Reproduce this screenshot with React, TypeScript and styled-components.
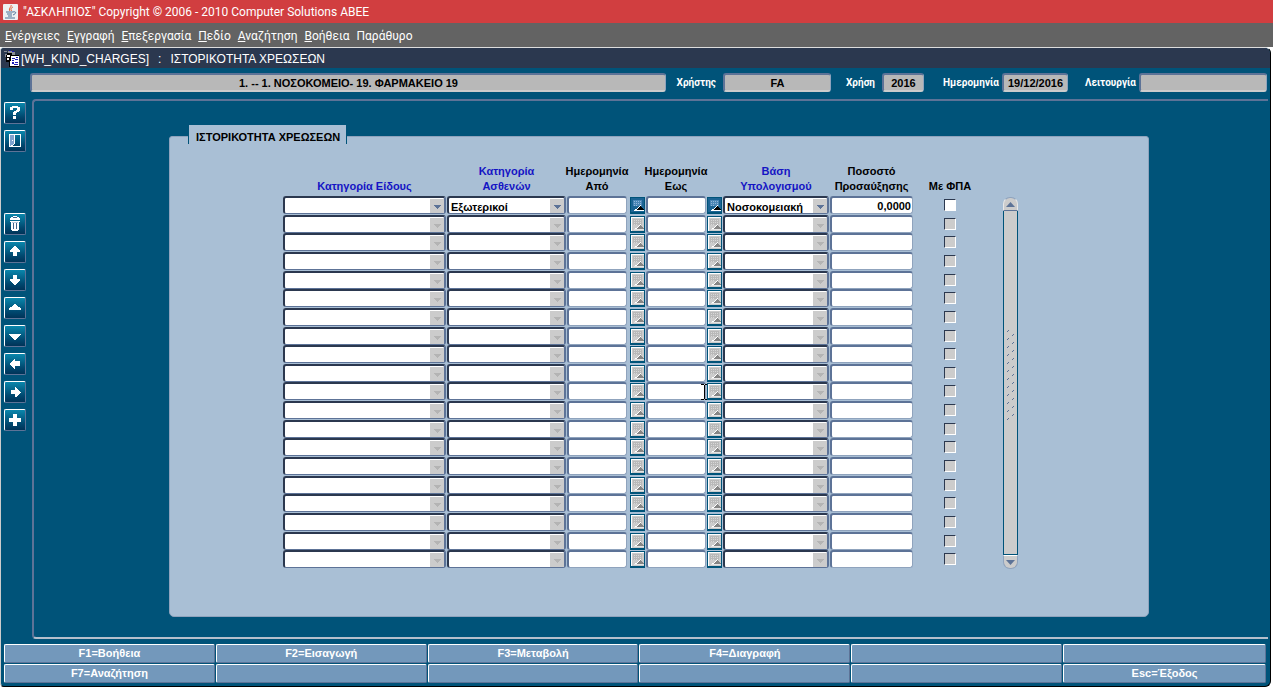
import React, { useState } from 'react';
import styled, { createGlobalStyle, css } from 'styled-components';

const c = {
  teal: '#005379',
  navy: '#2b384f',
  slate: '#5d7397',
  mist: '#a9bfd5',
  haze: '#8fa3bd',
  grey: '#cccccc',
  field: '#b8b8b8',
  blue: '#1414c4',
};

const GlobalStyle = createGlobalStyle`
  *, *::before, *::after { box-sizing: border-box; }
  body { margin: 0; background: #fff; }
  body, button, input, select { font-family: 'Liberation Sans', Arial, sans-serif; font-size: 11px; }
`;

const Page = styled.div`
  min-height: 100vh;
  display: flex;
  flex-direction: column;
`;

const TitleBar = styled.header`
  height: 23px;
  padding-left: 3px;
  display: flex;
  align-items: center;
  gap: 5px;
  background: #d13e40;
  color: #fff;
  font-family: Roboto, sans-serif;
  font-size: 12px;
  white-space: pre;
`;

const MenuBar = styled.nav`
  height: 24px;
  padding: 1px 0 0 5px;
  display: flex;
  align-items: center;
  gap: 7px;
  background: #636363;
`;

const MenuItem = styled.button`
  padding: 0;
  border: 0;
  background: none;
  color: #fff;
  font-family: Roboto, sans-serif;
  font-size: 12px;
  line-height: 16px;
`;

const Window = styled.main`
  flex: 1;
  margin: 0 2px 1px 0;
  display: flex;
  flex-direction: column;
  border: 1px solid #000;
  border-top-color: #ddd;
  border-left-color: #ccc;
  border-radius: 4px 6px 6px 4px;
  background: ${c.teal};
  overflow: hidden;
`;

const Caption = styled.h1`
  margin: 0;
  height: 20px;
  padding: 1px 0 0 3px;
  display: flex;
  align-items: center;
  background: ${c.navy};
  color: #fff;
  font-size: 12px;
  font-weight: 400;
  white-space: pre;
`;

const CaptionPart = styled.span`
  margin-right: 9px;
`;

const InfoBar = styled.div`
  padding: 5px 3px 7px 29px;
  display: grid;
  grid-template-columns: 1fr 57px 108px 51px 42px 78px 66px 71px 128px;
  align-items: center;
`;

const InfoLabel = styled.label<{ $tight?: boolean }>`
  padding-right: ${(p) => (p.$tight ? '3px' : '7px')};
  color: #fff;
  font: 700 10px Roboto, sans-serif;
  text-align: right;
`;

const InfoField = styled.input`
  width: 100%;
  height: 19px;
  padding: 0;
  border: 2px solid ${c.slate};
  border-right: 1px solid ${c.haze};
  border-bottom-color: ${c.grey};
  border-radius: 3px;
  background: ${c.field};
  color: #000;
  font-weight: 700;
  text-align: center;
`;

const Body = styled.div`
  flex: 1;
  display: flex;
`;

const ToolColumn = styled.div`
  width: 31px;
  padding: 3px 0 0 3px;
  display: flex;
  flex-direction: column;
  gap: 6px;
`;

const ToolButton = styled.button<{ $spaced?: boolean }>`
  width: 22px;
  height: 22px;
  padding: 0;
  margin-top: ${(p) => (p.$spaced ? '55px' : '0')};
  display: grid;
  place-items: center;
  border: 1px solid #fff;
  border-right-color: ${c.slate};
  border-bottom-color: ${c.slate};
  border-radius: 2px;
  background: linear-gradient(#0a87ac, #00476e 70%, #003358);
`;

const Frame = styled.section`
  flex: 1;
  margin-right: 2px;
  padding: 35px 119px 20px 135px;
  border: 2px solid ${c.slate};
  border-right: 0;
  border-bottom-color: #b4bfcc;
  border-radius: 4px 0 0 4px;
`;

const Panel = styled.div`
  padding: 0 18px 47px;
  border: 1px solid ${c.haze};
  border-radius: 3px 3px 5px 5px;
  background: ${c.mist};
`;

const PanelTitle = styled.h2`
  width: max-content;
  height: 19px;
  margin: -12px 0 0;
  padding: 4px 6px 0 7px;
  border: solid ${c.teal};
  border-width: 0 1px;
  background: ${c.mist};
  font-size: 11px;
  line-height: 16px;
`;

const Sheet = styled.div`
  margin: 20px 0 0 95px;
  display: flex;
  gap: 17px;
`;

const Grid = styled.table`
  display: block;
`;

const rowColumns = css`
  display: grid;
  grid-template-columns: 163px 119px 60px 17px 60px 15px 106px 83px 72px;
  column-gap: 1px;
`;

const Head = styled.thead`
  display: block;
`;

const HeadRow = styled.tr`
  ${rowColumns}
  height: 32px;
  align-items: end;
`;

const HeadCell = styled.th<{ $key?: boolean }>`
  padding: 0 0 2px;
  display: flex;
  justify-content: center;
  color: ${(p) => (p.$key ? c.blue : '#000')};
  font-size: 11px;
  line-height: 15px;
  white-space: pre;
`;

const Rows = styled.tbody`
  height: 373px;
  display: grid;
  grid-auto-rows: 1fr;
`;

const Row = styled.tr`
  ${rowColumns}
`;

const Cell = styled.td<{ $align?: string }>`
  position: relative;
  padding: 0;
  display: flex;
  justify-content: ${(p) => p.$align ?? 'stretch'};
`;

const Choice = styled.select`
  appearance: none;
  flex: 1;
  height: 18px;
  margin: 0;
  padding: 3px 0 0 2px;
  border: 2px solid ${c.navy};
  border-right-color: ${c.slate};
  border-bottom: 1px solid ${c.slate};
  border-radius: 3px;
  background: #fff;
  color: #000;
  font-weight: 700;
  opacity: 1;
`;

const ChoiceArrow = styled.svg`
  position: absolute;
  top: 3px;
  right: 2px;
  pointer-events: none;
`;

const Entry = styled.input`
  flex: 1;
  min-width: 0;
  height: 18px;
  padding: 0 1px;
  border: 2px solid ${c.slate};
  border-right: 1px solid ${c.haze};
  border-bottom: 1px solid ${c.haze};
  border-radius: 3px;
  background: #fff;
  color: #000;
  font-weight: 700;
  text-align: right;
`;

const DateButton = styled.button`
  flex: none;
  width: 15px;
  height: 17px;
  margin: 1px 0 0;
  padding: 0;
  display: flex;
  border: 1px solid ${c.teal};
  border-bottom-width: 2px;
  background: ${c.grey};
`;

const Tick = styled.input`
  appearance: none;
  width: 12px;
  height: 12px;
  margin: 3px 0 0;
  border: 1px solid ${c.navy};
  border-right-color: #fff;
  border-bottom-color: #fff;
  background: #fff;
  &:disabled { background: ${c.grey}; }
`;

const Caret = styled.svg`
  position: absolute;
  top: 2px;
  right: -2px;
`;

const Scroller = styled.div`
  width: 15px;
  margin-top: 33px;
  display: flex;
  flex-direction: column;
`;

const ScrollButton = styled.button<{ $end?: boolean }>`
  height: 14px;
  padding: 0;
  display: grid;
  place-items: center;
  border: 1px solid ${(p) => (p.$end ? c.haze : '#e8e8e8')};
  border-bottom-color: ${(p) => (p.$end ? c.haze : c.slate)};
  border-top-color: ${(p) => (p.$end ? '#fff' : c.haze)};
  border-radius: ${(p) => (p.$end ? '0 0 7px 7px' : '7px 7px 0 0')};
  background: ${c.grey};
`;

const ScrollTrack = styled.div`
  flex: 1;
  padding-top: 117px;
  display: grid;
  place-items: start center;
  border: 1px solid ${c.teal};
  border-top: 0;
  background: ${c.grey};
`;

const KeyBar = styled.footer`
  padding: 5px 4px 3px 3px;
  display: grid;
  grid-template-columns: repeat(5, 211fr) 203fr;
  grid-auto-rows: 19px;
  gap: 1px;
`;

const KeyButton = styled.button`
  padding: 0 0 2px;
  border: 1px solid #fff;
  border-right-color: ${c.slate};
  border-bottom-color: ${c.slate};
  border-radius: 2px;
  background: #7398bb;
  color: #fff;
  font-weight: 700;
`;

const Icon = ({ children }: { children: React.ReactNode }) => (
  <svg width="20" height="20" viewBox="0 0 20 20" fill="#fff" shapeRendering="crispEdges" aria-hidden>
    {children}
  </svg>
);

const tools = [
  { name: 'Βοήθεια', art: <path d="M5 4h2V3h6v1h2v4h-1v1h-2v1h-1v2H8V9h1V8h2V7h1V5H8v2H5zM8 13h3v3H8z" /> },
  {
    name: 'Έξοδος',
    art: (
      <>
        <path d="M4 3h12v13H4zM5 4v11h10V4z" fillRule="evenodd" />
        <path d="M5 4h4v9l-3 2H5z" fill="#7fa3cf" />
        <path d="M9 4h1v9H9zM8 13h1v1H8zM6 14h2v1H6zM7 9h1v1H7z" />
      </>
    ),
  },
  {
    name: 'Διαγραφή',
    spaced: true,
    art: (
      <>
        <path d="M8 2h4v1h2v1h1v2H5V4h1V3h2z" />
        <path d="M5 7h10v1h-1v8h-1v1H7v-1H6V8H5z" />
        <path d="M8 3h4v1H8zM8 9h1v6H8zM11 9h1v6h-1z" fill="#3f648c" />
        <path d="M7 8h6v1H7z" fill="#b9c8dc" />
      </>
    ),
  },
  { name: 'Προηγούμενη εγγραφή', art: <path d="M9 4h2v1h1v1h1v1h1v1h1v2h-3v4H8v-4H5V8h1V7h1V6h1V5h1z" /> },
  { name: 'Επόμενη εγγραφή', art: <path d="M8 5h4v4h3v2h-1v1h-1v1h-1v1h-1v1H9v-1H8v-1H7v-1H6v-1H5V9h3z" /> },
  { name: 'Προηγούμενη σελίδα', art: <path d="M9 6h2v1h1v1h1v1h2v1h1v2H4v-2h1V9h2V8h1V7h1z" /> },
  { name: 'Επόμενη σελίδα', art: <path d="M4 8h12v1h-1v1h-1v1h-1v1h-1v1h-1v1H9v-1H8v-1H7v-1H6v-1H5V9H4z" /> },
  { name: 'Προηγούμενο πεδίο', art: <path d="M9 5h1v2h5v5h-5v3H9v-1H8v-1H7v-1H6v-1H5V9h1V8h1V7h1V6h1z" /> },
  { name: 'Επόμενο πεδίο', art: <path d="M10 5h1v1h1v1h1v1h1v1h1v1h1v1h-1v1h-1v1h-1v1h-1v1h-2v-3H6V8h4z" /> },
  { name: 'Προσθήκη', art: <path d="M8 4h4v4h4v4h-4v4H8v-4H4V8h4z" /> },
];

const menus: [string, boolean][] = [
  ['Ενέργειες', true],
  ['Εγγραφή', true],
  ['Επεξεργασία', true],
  ['Πεδίο', true],
  ['Αναζήτηση', true],
  ['Βοήθεια', true],
  ['Παράθυρο', false],
];

const keys = ['F1=Βοήθεια', 'F2=Εισαγωγή', 'F3=Μεταβολή', 'F4=Διαγραφή', '', '', 'F7=Αναζήτηση', '', '', '', '', 'Esc=Έξοδος'];

const JavaIcon = () => (
  <svg width="15" height="16" viewBox="0 0 15 16" fill="none" aria-hidden>
    <rect width="15" height="16" rx="1" fill="#eef0f2" />
    <path d="M8 1c1 2-3 3-1 6M10 3c-2 1-3 2-1 4" stroke="#e0572c" />
    <path d="M3 8h7M4 10h5M5 12h4M2 14h10M10 8c4-1 3 2 0 3" stroke="#4b7196" />
  </svg>
);

const FormIcon = () => (
  <svg width="17" height="18" viewBox="0 0 17 18" shapeRendering="crispEdges" aria-hidden>
    <path d="M0 1h3v1H0zM1 4h3v3H1zM4 1h4v2H4zM8 2h3v3H8z" fill="#8b8d96" />
    <path d="M5 0h2v1H5zM8 1h2v1H8z" fill="#1717b8" />
    <path d="M3 3h5v2h7v12H5v-5H2V5h1z" fill="#000" />
    <path d="M3 5h3v2H3zM7 6h8v10H6v-5h1zM3 8h2v2H3z" fill="#fff" />
    <path d="M8 8h3v1H8zM8 10h2v1H8zM12 7h2v1h-2zM11 9h3v1h-3zM8 12h2v2H8zM11 12h3v1h-3zM10 14h4v1h-4z" fill="#1b1bb5" />
  </svg>
);

const Arrow = ({ live }: { live: boolean }) => (
  <ChoiceArrow width="14" height="14" viewBox="0 0 14 14" shapeRendering="crispEdges" aria-hidden>
    <path d="M0 0h14v14H0z" fill={c.grey} />
    <path d="M4 6h7v1h-1v1H9v1H8v1H7V9H6V8H5V7H4z" fill={live ? c.slate : '#b4b4b4'} />
  </ChoiceArrow>
);

const Calendar = ({ live }: { live: boolean }) => (
  <svg width="13" height="14" viewBox="0 0 13 14" shapeRendering="crispEdges" aria-hidden>
    <path d="M0 0h13v14H0z" fill={live ? '#1c6494' : c.grey} />
    {!live && <path d="M0 0h13v1H1v13H0z" fill="#fff" />}
    <path d="M2 2h9v6H2z" fill={live ? '#4a86b6' : '#b9b9b9'} />
    <path d="M3 3h1v1H3zM5 3h1v1H5zM7 3h1v1H7zM9 3h1v1H9zM3 5h1v1H3zM5 5h1v1H5zM7 5h1v1H7zM9 5h1v1H9zM3 7h1v1H3zM5 7h1v1H5z" fill={live ? '#8fb6da' : '#d8d8d8'} />
    <path d="M8 8h1v1H8zM7 9h1v1H7zM6 10h1v1H6zM4 11h2v1H4zM9 7h1v1H9z" fill="#fff" />
    <path d="M9 8h1v1h1v1h1v1h1v1H6v-1h1v-1h1V9h1z" fill={live ? '#000' : '#858585'} />
    <path d="M3 12h10v1H3z" fill={live ? '#fff' : '#e6e6e6'} />
  </svg>
);

const SelectBox = ({ live, label, value = '' }: { live: boolean; label: string; value?: string }) => (
  <Cell>
    <Choice aria-label={label} disabled={!live} defaultValue={value}>
      <option>{value}</option>
    </Choice>
    <Arrow live={live} />
  </Cell>
);

const ChargeRow = ({ index }: { index: number }) => {
  const live = index === 0;
  const [vat, setVat] = useState(false);
  return (
    <Row>
      <SelectBox live={live} label="Κατηγορία Είδους" />
      <SelectBox live={live} label="Κατηγορία Ασθενών" value={live ? 'Εξωτερικοί' : ''} />
      <Cell><Entry aria-label="Ημερομηνία Από" disabled={!live} /></Cell>
      <Cell $align="flex-end">
        <DateButton aria-label="Επιλογή ημερομηνίας από" disabled={!live}><Calendar live={live} /></DateButton>
      </Cell>
      <Cell>
        <Entry aria-label="Ημερομηνία Εως" disabled={!live} />
        {index === 10 && (
          <Caret width="7" height="16" viewBox="0 0 7 16" shapeRendering="crispEdges" aria-hidden>
            <path d="M0 0h3v1h1V0h3v1H4v14h3v1H4v-1H3v1H0v-1h3V1H0z" />
          </Caret>
        )}
      </Cell>
      <Cell>
        <DateButton aria-label="Επιλογή ημερομηνίας έως" disabled={!live}><Calendar live={live} /></DateButton>
      </Cell>
      <SelectBox live={live} label="Βάση Υπολογισμού" value={live ? 'Νοσοκομειακή' : ''} />
      <Cell><Entry aria-label="Ποσοστό Προσαύξησης" disabled={!live} defaultValue={live ? '0,0000' : ''} /></Cell>
      <Cell $align="center">
        <Tick type="checkbox" aria-label="Με ΦΠΑ" disabled={!live} checked={vat} onChange={() => setVat(!vat)} />
      </Cell>
    </Row>
  );
};

const infoFields = [
  { id: 'user', label: 'Χρήστης', value: 'FA' },
  { id: 'year', label: 'Χρήση', value: '2016' },
  { id: 'date', label: 'Ημερομηνία', value: '19/12/2016', tight: true },
  { id: 'mode', label: 'Λειτουργία', value: '', tight: true },
];

export default function App() {
  return (
    <Page>
      <GlobalStyle />
      <TitleBar>
        <JavaIcon />
        <span>"ΑΣΚΛΗΠΙΟΣ" Copyright © 2006 - 2010 Computer Solutions ΑΒΕΕ</span>
      </TitleBar>
      <MenuBar>
        {menus.map(([name, marked]) => (
          <MenuItem key={name}>{marked ? <><u>{name[0]}</u>{name.slice(1)}</> : name}</MenuItem>
        ))}
      </MenuBar>
      <Window>
        <Caption>
          <FormIcon />
          <CaptionPart>[WH_KIND_CHARGES]</CaptionPart>
          <CaptionPart>:</CaptionPart>
          <span>ΙΣΤΟΡΙΚΟΤΗΤΑ ΧΡΕΩΣΕΩΝ</span>
        </Caption>
        <InfoBar>
          <InfoField aria-label="Μονάδα" readOnly value="1. -- 1. ΝΟΣΟΚΟΜΕΙΟ- 19. ΦΑΡΜΑΚΕΙΟ 19" />
          {infoFields.map(({ id, label, value, tight }) => (
            <React.Fragment key={id}>
              <InfoLabel htmlFor={id} $tight={tight}>{label}</InfoLabel>
              <InfoField id={id} readOnly value={value} />
            </React.Fragment>
          ))}
        </InfoBar>
        <Body>
          <ToolColumn>
            {tools.map((tool) => (
              <ToolButton key={tool.name} aria-label={tool.name} $spaced={tool.spaced}>
                <Icon>{tool.art}</Icon>
              </ToolButton>
            ))}
          </ToolColumn>
          <Frame>
            <Panel>
              <PanelTitle>ΙΣΤΟΡΙΚΟΤΗΤΑ ΧΡΕΩΣΕΩΝ</PanelTitle>
              <Sheet>
                <Grid>
                  <Head>
                    <HeadRow>
                      <HeadCell $key>Κατηγορία Είδους</HeadCell>
                      <HeadCell $key>{'Κατηγορία\nΑσθενών'}</HeadCell>
                      <HeadCell>{'Ημερομηνία\nΑπό'}</HeadCell>
                      <td />
                      <HeadCell>{'Ημερομηνία\nΕως'}</HeadCell>
                      <td />
                      <HeadCell $key>{'Βάση\nΥπολογισμού'}</HeadCell>
                      <HeadCell>{'Ποσοστό\nΠροσαύξησης'}</HeadCell>
                      <HeadCell>Με ΦΠΑ</HeadCell>
                    </HeadRow>
                  </Head>
                  <Rows>
                    {Array.from({ length: 20 }, (_, i) => <ChargeRow key={i} index={i} />)}
                  </Rows>
                </Grid>
                <Scroller>
                  <ScrollButton aria-label="Κύλιση πάνω">
                    <svg width="9" height="5" viewBox="0 0 9 5" aria-hidden><path d="M4.500 0L9 5H0z" fill={c.slate} /></svg>
                  </ScrollButton>
                  <ScrollTrack>
                    <svg width="9" height="92" viewBox="0 0 9 92" aria-hidden>
                      <defs>
                        <pattern id="grip" width="5" height="8" patternUnits="userSpaceOnUse">
                          <path d="M1 3h1V2h1v1H2v1H1z" fill={c.slate} />
                        </pattern>
                        <pattern id="gripHigh" y="-4" width="5" height="8" patternUnits="userSpaceOnUse">
                          <path d="M1 3h1V2h1v1H2v1H1z" fill={c.slate} />
                        </pattern>
                      </defs>
                      <path d="M0 0h5v92H0z" fill="url(#grip)" />
                      <path d="M5 0h4v92H5z" fill="url(#gripHigh)" />
                    </svg>
                  </ScrollTrack>
                  <ScrollButton $end aria-label="Κύλιση κάτω">
                    <svg width="9" height="5" viewBox="0 0 9 5" aria-hidden><path d="M0 0h9L4.500 5z" fill={c.slate} /></svg>
                  </ScrollButton>
                </Scroller>
              </Sheet>
            </Panel>
          </Frame>
        </Body>
        <KeyBar>
          {keys.map((label, i) => <KeyButton key={i}>{label}</KeyButton>)}
        </KeyBar>
      </Window>
    </Page>
  );
}
